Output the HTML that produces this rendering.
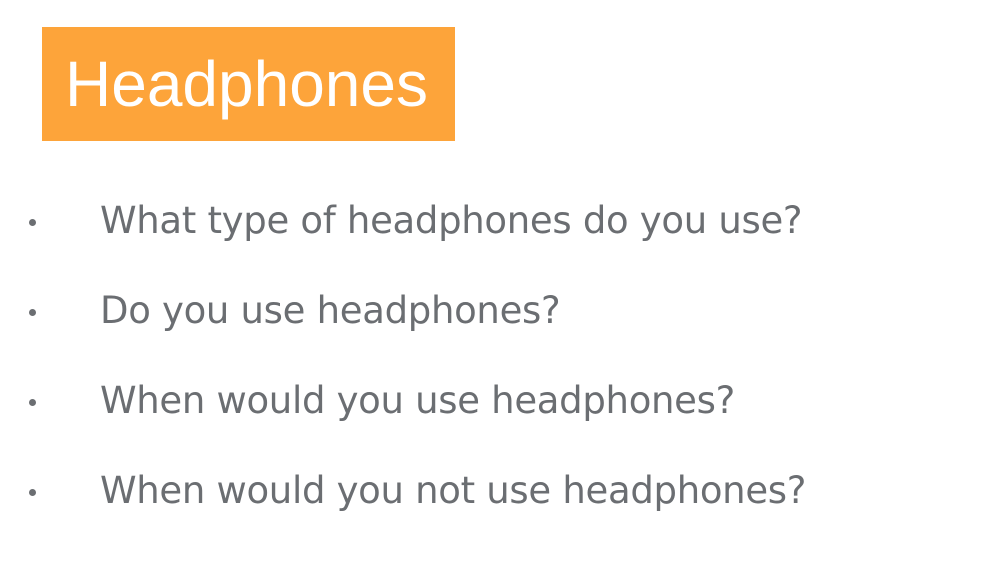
<!DOCTYPE html>
<html><head><meta charset="utf-8"><style>
html,body{margin:0;padding:0;background:#fff;width:998px;height:580px;overflow:hidden;position:relative}
.box{position:absolute;left:42px;top:27px;width:413px;height:114px;background:#fda43a}
.title{position:absolute;left:65px;top:44px;font:64px "Liberation Sans",sans-serif;color:#fff;line-height:80px;white-space:nowrap}
.li{position:absolute;left:100px;font:37px "DejaVu Sans","Liberation Sans",sans-serif;letter-spacing:-0.3px;color:#6b6e72;white-space:nowrap;line-height:44px}
.b{position:absolute;left:29px;width:7px;height:7px;border-radius:50%;background:#6b6e72}
</style></head><body>
<div class="box"></div>
<div class="title">Headphones</div>
<div class="b" style="top:219px"></div><div class="li" style="top:199px">What type of headphones do you use?</div>
<div class="b" style="top:309px"></div><div class="li" style="top:289px">Do you use headphones?</div>
<div class="b" style="top:399px"></div><div class="li" style="top:379px">When would you use headphones?</div>
<div class="b" style="top:489px"></div><div class="li" style="top:469px">When would you not use headphones?</div>
</body></html>
